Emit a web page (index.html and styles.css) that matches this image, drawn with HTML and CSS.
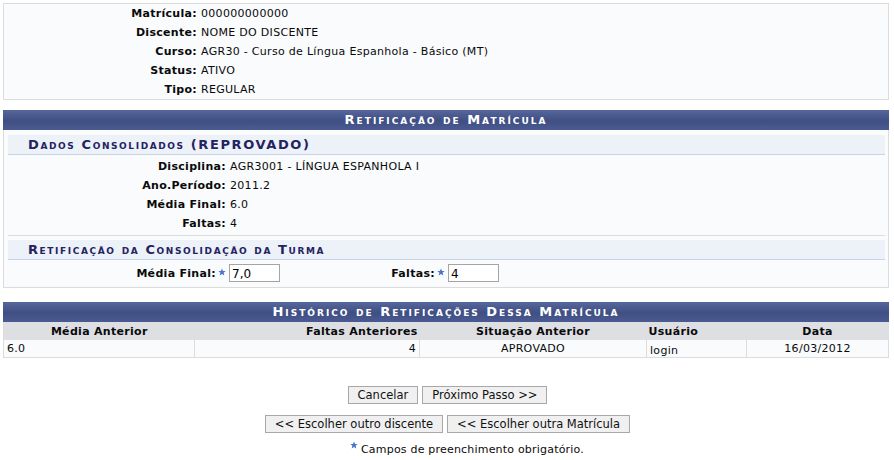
FILE: index.html
```html
<!DOCTYPE html>
<html lang="pt-BR">
<head>
  <meta charset="UTF-8" />
  <title>Retificação de Matrícula</title>
  <link rel="stylesheet" href="styles.css">
</head>
<body>
  <table class="visualizacao">
    <tr><th>Matrícula:</th><td>000000000000</td></tr>
    <tr><th>Discente:</th><td>NOME DO DISCENTE</td></tr>
    <tr><th>Curso:</th><td>AGR30 - Curso de Língua Espanhola - Básico (MT)</td></tr>
    <tr><th>Status:</th><td>ATIVO</td></tr>
    <tr><th>Tipo:</th><td>REGULAR</td></tr>
  </table>

  <div class="formulario">
    <div class="caption">Retificação de Matrícula</div>
    <div class="corpo">
      <div class="subformulario">Dados Consolidados (REPROVADO)</div>
      <table class="dados">
        <tr><th>Disciplina:</th><td>AGR3001 - LÍNGUA ESPANHOLA I</td></tr>
        <tr><th>Ano.Período:</th><td>2011.2</td></tr>
        <tr><th>Média Final:</th><td>6.0</td></tr>
        <tr><th>Faltas:</th><td>4</td></tr>
      </table>
      <div class="subformulario">Retificação da Consolidação da Turma</div>
      <div class="campos">
        <label class="rotulo" for="media">Média Final:<span class="obrigatorio"><svg viewBox="0 0 10 10"><polygon points="5,0.5 6.3,3.6 9.6,3.8 7,6 7.9,9.4 5,7.5 2.1,9.4 3,6 0.4,3.8 3.7,3.6" /></svg></span></label>
        <div class="campo"><input id="media" type="text" value="7,0"></div>
        <label class="rotulo" for="faltas">Faltas:<span class="obrigatorio"><svg viewBox="0 0 10 10"><polygon points="5,0.5 6.3,3.6 9.6,3.8 7,6 7.9,9.4 5,7.5 2.1,9.4 3,6 0.4,3.8 3.7,3.6" /></svg></span></label>
        <div class="campo"><input id="faltas" type="text" value="4"></div>
      </div>
    </div>
  </div>

  <div class="listagem">
    <div class="caption">Histórico de Retificações Dessa Matrícula</div>
    <table class="historico">
      <colgroup>
        <col style="width: 191px">
        <col style="width: 225px">
        <col style="width: 227px">
        <col style="width: 100px">
        <col>
      </colgroup>
      <thead>
        <tr>
          <th class="centro">Média Anterior</th>
          <th class="direita">Faltas Anteriores</th>
          <th class="centro">Situação Anterior</th>
          <th>Usuário</th>
          <th class="centro">Data</th>
        </tr>
      </thead>
      <tbody>
        <tr>
          <td>6.0</td>
          <td class="direita">4</td>
          <td class="centro">APROVADO</td>
          <td class="baixo">login</td>
          <td class="centro">16/03/2012</td>
        </tr>
      </tbody>
    </table>
  </div>

  <div class="botoes">
    <button>Cancelar</button>
    <button>Próximo Passo &gt;&gt;</button>
  </div>
  <div class="botoes segunda">
    <button>&lt;&lt; Escolher outro discente</button>
    <button>&lt;&lt; Escolher outra Matrícula</button>
  </div>

  <p class="nota"><span class="obrigatorio"><svg viewBox="0 0 10 10"><polygon points="5,0.5 6.3,3.6 9.6,3.8 7,6 7.9,9.4 5,7.5 2.1,9.4 3,6 0.4,3.8 3.7,3.6" /></svg></span>Campos de preenchimento obrigatório.</p>
</body>
</html>
```

FILE: styles.css
```css
body {
  margin: 3px;
  background: #fff;
  color: #0a0a0a;
  font-family: "DejaVu Sans", Verdana, sans-serif;
  font-size: 11px;
  letter-spacing: 0.3px;
}
table {
  border-collapse: collapse;
  font-size: 11px;
}
.visualizacao {
  width: 886px;
  background: #f9fbfd;
  border: 1px solid #dcdcdc;
}
.visualizacao th, .dados th {
  text-align: right;
  font-weight: bold;
  padding: 3px 2px 3px 0;
  line-height: 13px;
}
.visualizacao th {
  width: 193px;
}
.visualizacao td, .dados td {
  padding: 3px 2px;
  line-height: 13px;
}
.caption {
  height: 20px;
  line-height: 20px;
  text-align: center;
  color: #fff;
  font-weight: bold;
  font-variant: small-caps;
  letter-spacing: 2px;
  font-size: 13px;
  background: linear-gradient(#56679c, #3f4e83 55%, #4b5b91);
}
.formulario {
  width: 886px;
  margin-top: 10px;
}
.corpo {
  background: #f9fbfd;
  border: 1px solid #dcdcdc;
  border-top: none;
  padding: 5px 3px 0 4px;
}
.subformulario {
  height: 19px;
  line-height: 20px;
  padding-left: 20px;
  background: #edf1f8;
  border-bottom: 1px solid #c6d3e9;
  color: #232362;
  font-weight: bold;
  font-variant: small-caps;
  letter-spacing: 1.6px;
  font-size: 13px;
}
.dados {
  width: 100%;
  margin-bottom: 4px;
  border-bottom: 1px solid #dcdcdc;
}
.dados tr:first-child th, .dados tr:first-child td {
  padding-top: 5px;
}
.dados tr:last-child th, .dados tr:last-child td {
  padding-bottom: 5px;
}
.dados th {
  width: 218px;
}
.campos {
  display: grid;
  grid-template-columns: 218px 110px 109px auto;
  align-items: center;
  padding: 4px 0 5px;
}
.rotulo {
  font-weight: bold;
  text-align: right;
  white-space: nowrap;
}
.campo {
  padding-left: 3px;
}
.campo input {
  width: 51px;
  height: 18px;
  box-sizing: border-box;
  border: 1px solid #a5a5a5;
  padding: 1px 2px 0;
  font-family: "DejaVu Sans", Verdana, sans-serif;
  font-size: 12px;
  background: #fff;
  color: #000;
}
.obrigatorio {
  display: inline-block;
  width: 8px;
  height: 8px;
  margin-left: 2px;
  vertical-align: 1px;
}
.obrigatorio svg {
  display: block;
  width: 8px;
  height: 8px;
  fill: #4876c9;
}
.listagem {
  width: 886px;
  margin-top: 14px;
}
.historico {
  width: 100%;
  table-layout: fixed;
  border-left: 1px solid #dcdcdc;
}
.historico th {
  background: #dedfe3;
  font-weight: bold;
  text-align: left;
  height: 18px;
  padding: 0 2px;
}
.historico td {
  background: #f9fbfd;
  height: 17px;
  padding: 0 3px;
  border-right: 1px solid #dcdcdc;
  border-bottom: 1px solid #dcdcdc;
}
.historico .centro {
  text-align: center;
}
.historico .direita {
  text-align: right;
}
.historico .baixo {
  padding-top: 3px;
  height: 14px;
}
.botoes {
  display: flex;
  justify-content: center;
  gap: 4px;
  margin-top: 28px;
  padding-left: 1px;
}
.botoes.segunda {
  margin-top: 11px;
}
.botoes button {
  height: 18px;
  padding: 0 9px;
  background: #f0f0f0;
  border: 1px solid #a8a8a8;
  font-family: "DejaVu Sans", Verdana, sans-serif;
  font-size: 11.5px;
  color: #111;
}
.nota {
  margin: 8px 0 0;
  text-align: center;
  padding-left: 40px;
  font-size: 11px;
  letter-spacing: 0.2px;
}
.nota .obrigatorio {
  margin: 0 3px 0 0;
  vertical-align: 4px;
}
```
